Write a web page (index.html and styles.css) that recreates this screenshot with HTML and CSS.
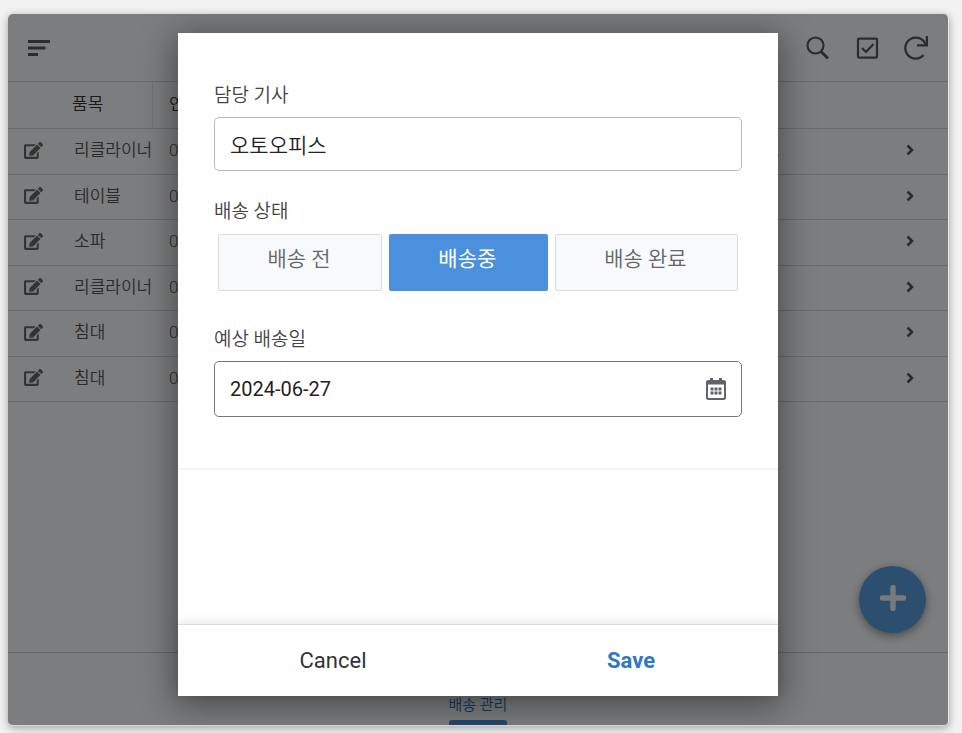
FILE: index.html
```html
<!DOCTYPE html>
<html lang="ko">
<head>
    <meta charset="UTF-8">
    <meta name="viewport" content="width=device-width, initial-scale=1">
    <title>배송 관리</title>
    <link rel="stylesheet" href="styles.css">
</head>
<body>
    <svg width="0" height="0" class="sprite">
        <symbol id="icon-edit" viewBox="0 0 576 512">
            <path d="M402.600 83.200l90.200 90.200c3.800 3.800 3.800 10 0 13.800L274.400 405.600l-92.800 10.300c-12.400 1.400-22.900-9.100-21.500-21.500l10.300-92.800L388.800 83.200c3.800-3.800 10-3.800 13.800 0zm162-22.900l-48.800-48.800c-15.200-15.200-39.900-15.200-55.200 0l-35.400 35.400c-3.800 3.800-3.800 10 0 13.800l90.200 90.200c3.800 3.800 10 3.800 13.800 0l35.400-35.400c15.200-15.300 15.200-40 0-55.200zM384 346.200V448H64V128h229.800c3.200 0 6.200-1.300 8.500-3.500l40-40c7.600-7.600 2.200-20.500-8.500-20.500H48C21.500 64 0 85.500 0 112v352c0 26.500 21.500 48 48 48h352c26.500 0 48-21.500 48-48V306.200c0-10.700-12.900-16-20.500-8.500l-40 40c-2.200 2.300-3.500 5.300-3.500 8.500z"/>
        </symbol>
        <symbol id="icon-chevron" viewBox="0 0 8 12">
            <path d="M1.500 1.500L6 6l-4.500 4.500" fill="none" stroke="currentColor" stroke-width="2.500"/>
        </symbol>
    </svg>

    <div class="app">
        <header class="toolbar">
            <button class="icon-btn" aria-label="메뉴">
                <svg width="22" height="18" viewBox="0 0 22 18" fill="none" stroke="currentColor" stroke-width="3">
                    <path d="M0 2.500h22M0 9h17.500M0 15.500h10"/>
                </svg>
            </button>
            <div class="toolbar-actions">
                <button class="icon-btn" aria-label="검색">
                    <svg width="24" height="24" viewBox="0 0 24 24" fill="none" stroke="currentColor">
                        <circle cx="9.500" cy="9.500" r="8" stroke-width="2.200"/>
                        <path d="M15 15.500l7 7" stroke-width="3"/>
                    </svg>
                </button>
                <button class="icon-btn" aria-label="선택">
                    <svg width="24" height="24" viewBox="0 0 24 24" fill="none" stroke="currentColor" stroke-width="2.200">
                        <rect x="3" y="2.600" width="19" height="19" rx="1"/>
                        <path d="M7 12l4 4 7.500-8"/>
                    </svg>
                </button>
                <button class="icon-btn" aria-label="새로고침">
                    <svg width="24" height="24" viewBox="0 0 24 24" fill="none" stroke="currentColor" stroke-width="2.300">
                        <path d="M19.600 19.100A10.500 10.500 0 1 1 21.900 9.300"/>
                        <path d="M22.900 0v9.300H13"/>
                    </svg>
                </button>
            </div>
        </header>

        <main class="content">
            <table class="orders">
                <thead>
                    <tr>
                        <th class="col-edit"></th>
                        <th class="col-item">품목</th>
                        <th>연락처</th>
                        <th></th>
                        <th class="col-open"></th>
                    </tr>
                </thead>
                <tbody>
                    <tr>
                        <td class="col-edit"><svg class="edit"><use href="#icon-edit"/></svg></td>
                        <td class="item">리클라이너</td>
                        <td>010</td>
                        <td class="col-more">...</td>
                        <td class="col-open"><svg class="chevron"><use href="#icon-chevron"/></svg></td>
                    </tr>
                    <tr>
                        <td class="col-edit"><svg class="edit"><use href="#icon-edit"/></svg></td>
                        <td class="item">테이블</td>
                        <td>010</td>
                        <td></td>
                        <td class="col-open"><svg class="chevron"><use href="#icon-chevron"/></svg></td>
                    </tr>
                    <tr>
                        <td class="col-edit"><svg class="edit"><use href="#icon-edit"/></svg></td>
                        <td class="item">소파</td>
                        <td>010</td>
                        <td></td>
                        <td class="col-open"><svg class="chevron"><use href="#icon-chevron"/></svg></td>
                    </tr>
                    <tr>
                        <td class="col-edit"><svg class="edit"><use href="#icon-edit"/></svg></td>
                        <td class="item">리클라이너</td>
                        <td>010</td>
                        <td></td>
                        <td class="col-open"><svg class="chevron"><use href="#icon-chevron"/></svg></td>
                    </tr>
                    <tr>
                        <td class="col-edit"><svg class="edit"><use href="#icon-edit"/></svg></td>
                        <td class="item">침대</td>
                        <td>010</td>
                        <td></td>
                        <td class="col-open"><svg class="chevron"><use href="#icon-chevron"/></svg></td>
                    </tr>
                    <tr>
                        <td class="col-edit"><svg class="edit"><use href="#icon-edit"/></svg></td>
                        <td class="item">침대</td>
                        <td>010</td>
                        <td></td>
                        <td class="col-open"><svg class="chevron"><use href="#icon-chevron"/></svg></td>
                    </tr>
                </tbody>
            </table>
        </main>

        <nav class="tabbar">
            <a class="tab" href="#">배송 관리</a>
        </nav>

        <button class="fab" aria-label="추가">
            <svg width="26" height="26" viewBox="0 0 26 26">
                <path d="M13 2.500v21M2.500 13h21" stroke="currentColor" stroke-width="5.500" stroke-linecap="round"/>
            </svg>
        </button>

        <div class="overlay">
            <form class="dialog" role="dialog" aria-label="배송 상태 수정">
                <div class="dialog-body">
                    <div class="fields">
                        <div class="field">
                            <label for="driver">담당 기사</label>
                            <input class="input" type="text" id="driver" value="오토오피스">
                        </div>
                        <div class="field" role="group" aria-labelledby="status-label">
                            <span class="field-label" id="status-label">배송 상태</span>
                            <div class="segments">
                                <button type="button" class="segment" aria-pressed="false">배송 전</button>
                                <button type="button" class="segment active" aria-pressed="true">배송중</button>
                                <button type="button" class="segment" aria-pressed="false">배송 완료</button>
                            </div>
                        </div>
                        <div class="field">
                            <label for="date">예상 배송일</label>
                            <div class="date-box">
                                <input type="text" id="date" value="2024-06-27">
                                <button type="button" class="date-btn" aria-label="달력">
                                    <svg width="20" height="23" viewBox="0 0 20 23">
                                        <path fill="currentColor" fill-rule="evenodd" d="M4 0h3v2h6V0h3v2h1.500A2.500 2.500 0 0 1 20 4.500v15a2.500 2.500 0 0 1-2.500 2.500h-15A2.500 2.500 0 0 1 0 19.500v-15A2.500 2.500 0 0 1 2.500 2H4zM2 6.500v12.800c0 .4.300.7.700.7h14.600c.4 0 .7-.3.700-.7V6.500z"/>
                                        <path fill="currentColor" d="M4.500 9.500h3v3h-3zM8.500 9.500h3v3h-3zM12.500 9.500h3v3h-3zM4.500 13.500h3v3h-3zM8.500 13.500h3v3h-3zM12.500 13.500h3v3h-3z"/>
                                    </svg>
                                </button>
                            </div>
                        </div>
                    </div>
                </div>
                <div class="dialog-footer">
                    <button type="button" class="cancel">Cancel</button>
                    <button type="submit" class="save">Save</button>
                </div>
            </form>
        </div>
    </div>
</body>
</html>
```
FILE: styles.css
```css
* {
    box-sizing: border-box;
}

body {
    margin: 0;
    padding: 14px 13px 7px 8px;
    height: 100vh;
    background: #f2f2f2;
    font-family: Roboto, "Noto Sans CJK KR", sans-serif;
    font-weight: 350;
    color: #333;
}

button,
input {
    font: inherit;
    color: inherit;
    border: none;
    background: none;
    padding: 0;
}

button {
    cursor: pointer;
}

svg {
    display: block;
}

.sprite {
    position: absolute;
}

.app {
    position: relative;
    display: flex;
    flex-direction: column;
    height: 100%;
    min-height: 600px;
    overflow: hidden;
    background: #f8fafc;
    border-right: 1px solid #e8e8e8;
    border-bottom: 1px solid #d8d8d8;
    border-radius: 5px;
    box-shadow: 0 2px 8px rgba(0,0,0,0.35);
}

/* top bar */
.toolbar {
    display: flex;
    justify-content: space-between;
    align-items: center;
    height: 68px;
    padding: 0 20px;
    border-bottom: 1px solid #d4d6d8;
}

.toolbar-actions {
    display: flex;
    gap: 25px;
}

.icon-btn {
    color: #55585d;
}

/* order list */
.content {
    flex: 1;
}

.orders {
    width: 100%;
    height: 320px;
    border-collapse: separate;
    border-spacing: 0;
    table-layout: fixed;
    font-size: 17px;
    line-height: 24px;
}

.orders th,
.orders td {
    padding: 0 0 2px 16px;
    border-bottom: 1px solid #d4d6d8;
    text-align: left;
    white-space: nowrap;
    color: #555;
}

.orders th {
    height: 47px;
    font-weight: 350;
    color: #333;
}

.orders .col-edit {
    width: 48px;
}

.orders .col-item {
    width: 97px;
    border-right: 1px solid #e2e4e6;
}

.orders .item {
    padding-left: 18px;
}

.orders .col-more {
    text-align: right;
}

.orders .col-open {
    width: 168px;
}

.edit {
    width: 19px;
    height: 17px;
    fill: #666;
}

.chevron {
    width: 8px;
    height: 12px;
    margin: 0 34px 0 auto;
    color: #555;
}

/* bottom tabs */
.tabbar {
    display: flex;
    justify-content: center;
    align-items: flex-end;
    height: 73px;
    border-top: 1px solid #c8cacc;
}

.tab {
    display: flex;
    flex-direction: column;
    gap: 5px;
    font-size: 15px;
    line-height: 20px;
    color: #2f6db5;
    text-decoration: none;
}

.tab::after {
    content: "";
    height: 5px;
    border-radius: 3px 3px 0 0;
    background: #4a90d9;
}

.fab {
    position: absolute;
    right: 22px;
    bottom: 92px;
    display: flex;
    justify-content: center;
    align-items: center;
    width: 67px;
    height: 67px;
    padding-bottom: 3px;
    border-radius: 50%;
    background: #5a9fdf;
    color: #f0f2f4;
    box-shadow: 0 3px 10px rgba(0,0,0,0.4);
}

/* dialog */
.overlay {
    position: absolute;
    inset: 0;
    display: flex;
    justify-content: center;
    padding: 19px 20px 29px;
    background: rgba(0,0,0,0.5);
}

.dialog {
    display: flex;
    flex-direction: column;
    width: 100%;
    max-width: 600px;
    background: #fff;
    box-shadow: 0 6px 32px 4px rgba(0,0,0,0.4);
}

.dialog-body {
    flex: 1;
    overflow: auto;
}

.fields {
    padding: 50px 36px 23px;
    border-bottom: 2px solid #f4f4f4;
}

.field {
    margin-bottom: 28px;
}

.field label,
.field-label {
    display: block;
    margin-bottom: 8px;
    font-size: 19px;
    line-height: 26px;
    color: #444;
}

.input,
.date-box {
    width: 100%;
    height: 54px;
    padding: 0 15px;
    border: 1px solid #b8babd;
    border-radius: 5px;
    font-size: 21px;
    color: #222;
}

.date-box {
    display: flex;
    align-items: center;
    height: 56px;
    border-color: #777;
    font-size: 20px;
    font-weight: 400;
}

.date-box input {
    flex: 1;
    min-width: 0;
}

.date-btn {
    color: #5f6368;
}

.segments {
    display: flex;
    gap: 7px;
    margin: 9px 4px 36px;
}

.segment {
    flex: 1 1 auto;
    height: 57px;
    padding: 0 50px 12px 48px;
    border: 1px solid #d9dbdd;
    border-radius: 2px;
    background: #f8f9fa;
    font-size: 21px;
    white-space: nowrap;
    color: #666;
}

.segment.active {
    background: #4a90dc;
    border-color: #4a90dc;
    font-weight: 400;
    color: #fff;
}

.dialog-footer {
    display: flex;
    gap: 4px;
    padding-left: 8px;
    border-top: 1px solid #dcdcdc;
    box-shadow: 0 -2px 10px rgba(0,0,0,0.1);
}

.dialog-footer button {
    flex: 1;
    height: 71px;
    font-size: 22px;
    font-weight: 400;
}

.dialog-footer .save {
    font-weight: 700;
    color: #2f78c4;
}
```
